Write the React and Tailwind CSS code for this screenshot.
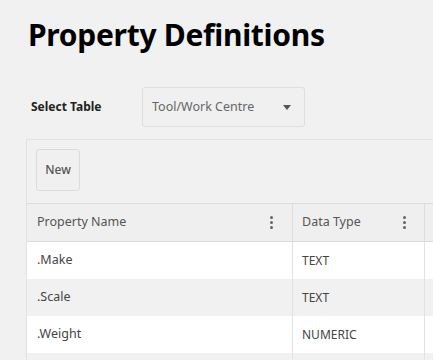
import React from "react";

const rows = [
  { name: ".Make", type: "TEXT" },
  { name: ".Scale", type: "TEXT" },
  { name: ".Weight", type: "NUMERIC" },
  { name: "", type: "" },
];

const Dots = () => (
  <span className="flex flex-col gap-[2px]">
    <span className="w-[3px] h-[3px] rounded-full bg-[#5f6470]" />
    <span className="w-[3px] h-[3px] rounded-full bg-[#5f6470]" />
    <span className="w-[3px] h-[3px] rounded-full bg-[#5f6470]" />
  </span>
);

export default function App() {
  return (
    <div
      className="w-[433px] h-[360px] overflow-hidden bg-[#f1f1f1] text-[#333]"
      style={{ fontFamily: '"Noto Sans", "Open Sans", Arial, sans-serif' }}
    >
      <h1 className="pl-[28px] pt-[15px] text-[30px] leading-[40px] font-bold text-black tracking-[-0.3px]">
        Property Definitions
      </h1>

      <div className="flex items-center mt-[32px] pl-[31px] h-[40px]">
        <span className="w-[111px] text-[12px] font-bold text-[#222]">Select Table</span>
        <div className="flex items-center justify-between w-[163px] h-[40px] px-[9px] bg-[#f0f0f0] border border-[#dedede] rounded-[3px]">
          <span className="text-[12.5px] text-[#666]">Tool/Work Centre</span>
          <span className="w-0 h-0 mr-[4px] border-l-[4px] border-r-[4px] border-t-[5px] border-l-transparent border-r-transparent border-t-[#555]" />
        </div>
      </div>

      <div className="ml-[26px] mt-[12px] w-[600px] border-t border-l border-[#e2e2e2]">
        <div className="pt-[9px] pl-[9px] pb-[12px]">
          <button className="w-[44px] h-[42px] bg-[#f0f0f0] border border-[#dcdcdc] rounded-[3px] text-[12px] font-medium text-[#555]">
            New
          </button>
        </div>

        <div className="border-t border-[#dcdcdc]">
          <div className="grid grid-cols-[266px_132px_200px] h-[38px] bg-[#efefef] border-b border-[#dcdcdc]">
            <div className="flex items-center justify-between pl-[10px] pr-[19px] border-r border-[#dcdcdc]">
              <span className="text-[12.5px] text-[#555]">Property Name</span>
              <Dots />
            </div>
            <div className="flex items-center justify-between pl-[9px] pr-[18px] border-r border-[#dcdcdc]">
              <span className="text-[12.5px] text-[#555]">Data Type</span>
              <Dots />
            </div>
            <div />
          </div>
          {rows.map((r, i) => (
            <div
              key={i}
              className={`grid grid-cols-[266px_132px_200px] h-[37px] ${i % 2 === 0 ? "bg-white" : "bg-[#f1f1f1]"}`}
            >
              <div className="flex items-center pl-[10px] border-r border-[#e2e2e2] text-[12.5px] text-[#444]">
                {r.name}
              </div>
              <div className="flex items-center pl-[9px] border-r border-[#e2e2e2] text-[12px] text-[#444]">
                {r.type}
              </div>
              <div />
            </div>
          ))}
        </div>
      </div>
    </div>
  );
}
